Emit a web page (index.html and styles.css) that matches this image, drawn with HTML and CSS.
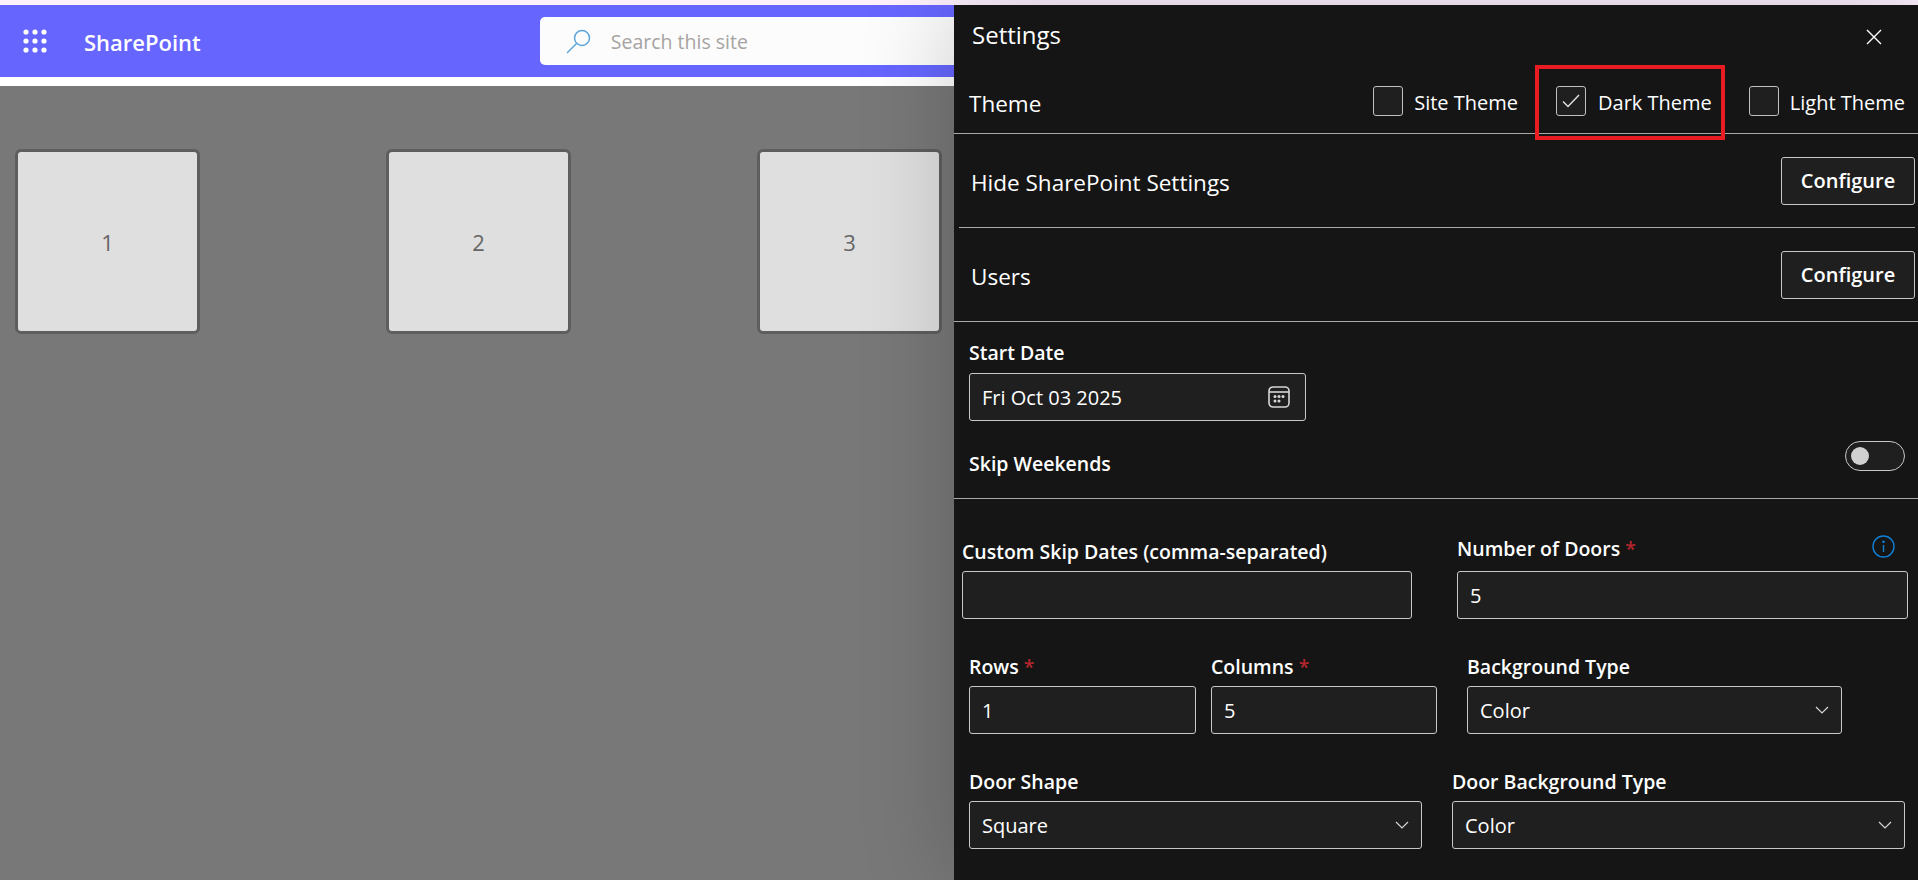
FILE: index.html
```html
<!DOCTYPE html>
<html lang="en">
<head>
    <meta charset="UTF-8">
    <title>SharePoint Settings</title>
    <link rel="stylesheet" href="styles.css">
</head>
<body>
    <div class="page">
        <main class="site">
            <header class="suite-bar">
                <svg class="waffle" width="24" height="24" viewBox="0 0 24 24" fill="#fff">
                    <circle cx="3" cy="3" r="2.6"/><circle cx="12" cy="3" r="2.6"/><circle cx="21" cy="3" r="2.6"/>
                    <circle cx="3" cy="12" r="2.6"/><circle cx="12" cy="12" r="2.6"/><circle cx="21" cy="12" r="2.6"/>
                    <circle cx="3" cy="21" r="2.6"/><circle cx="12" cy="21" r="2.6"/><circle cx="21" cy="21" r="2.6"/>
                </svg>
                <span class="brand">SharePoint</span>
                <div class="search">
                    <svg class="search-icon" width="25" height="25" viewBox="0 0 25 25" fill="none" stroke="#5ba4dc" stroke-width="1.5">
                        <circle cx="16" cy="9" r="7.5"/>
                        <path d="M10.5 14.5 1 24"/>
                    </svg>
                    <span class="search-text">Search this site</span>
                </div>
            </header>
            <div class="white-gap"></div>
            <section class="doors">
                <div class="door">1</div>
                <div class="door">2</div>
                <div class="door">3</div>
            </section>
        </main>

        <aside class="panel">
            <div class="panel-head">
                <span class="panel-title">Settings</span>
                <svg class="close" width="16" height="16" viewBox="0 0 16 16" stroke="#fff" stroke-width="1.4">
                    <path d="M1 1 15 15M15 1 1 15"/>
                </svg>
            </div>

            <div class="theme-row">
                <span class="row-title">Theme</span>
                <div class="theme-options">
                    <label class="check check-site"><span class="box"></span>Site Theme</label>
                    <label class="check check-dark">
                        <span class="box">
                            <svg width="18" height="14" viewBox="0 0 18 14" fill="none" stroke="#e4e4e4" stroke-width="1.4"><path d="M1 7.5 6 12.5 17 1"/></svg>
                        </span>
                        Dark Theme
                    </label>
                    <label class="check"><span class="box"></span>Light Theme</label>
                </div>
                <div class="highlight"></div>
            </div>

            <div class="config-row config-inset">
                <span class="row-title">Hide SharePoint Settings</span>
                <button class="config-btn">Configure</button>
            </div>
            <div class="config-row config-users">
                <span class="row-title">Users</span>
                <button class="config-btn">Configure</button>
            </div>

            <div class="date-section">
                <div class="field-label">Start Date</div>
                <div class="input date-input">
                    Fri Oct 03 2025
                    <svg width="22" height="22" viewBox="0 0 22 22" fill="none" stroke="#d6d6d6" stroke-width="1.6">
                        <rect x="1" y="1" width="20" height="20" rx="4"/>
                        <path d="M1 6h20"/>
                        <g fill="#d6d6d6" stroke="none">
                            <circle cx="7" cy="10.5" r="1.5"/><circle cx="11" cy="10.5" r="1.5"/><circle cx="15" cy="10.5" r="1.5"/>
                            <circle cx="7" cy="15" r="1.5"/><circle cx="11" cy="15" r="1.5"/>
                        </g>
                    </svg>
                </div>
                <div class="skip-row">
                    <span class="field-label skip-label">Skip Weekends</span>
                    <span class="toggle"><span class="knob"></span></span>
                </div>
            </div>

            <div class="form-grid grid-dates">
                <div class="field">
                    <div class="field-label">Custom Skip Dates (comma-separated)</div>
                    <div class="input"></div>
                </div>
                <div class="field">
                    <div class="field-label label-doors">
                        <span>Number of Doors <span class="req">*</span></span>
                        <svg class="info" width="23" height="23" viewBox="0 0 23 23" fill="none" stroke="#0f7fd6" stroke-width="1.4">
                            <circle cx="11.5" cy="11.5" r="10.5"/>
                            <path d="M11.5 10v7"/>
                            <circle cx="11.5" cy="6.8" r=".6" fill="#0f7fd6"/>
                        </svg>
                    </div>
                    <div class="input">5</div>
                </div>
            </div>

            <div class="form-grid grid-rows">
                <div class="field">
                    <div class="field-label">Rows <span class="req">*</span></div>
                    <div class="input">1</div>
                </div>
                <div class="field">
                    <div class="field-label">Columns <span class="req">*</span></div>
                    <div class="input">5</div>
                </div>
                <div class="field field-bg">
                    <div class="field-label">Background Type</div>
                    <div class="input select">
                        Color
                        <svg class="chev" width="14" height="8" viewBox="0 0 14 8" fill="none" stroke="#d6d6d6" stroke-width="1.2"><path d="M1 1 7 7 13 1"/></svg>
                    </div>
                </div>
            </div>

            <div class="form-grid grid-door">
                <div class="field">
                    <div class="field-label">Door Shape</div>
                    <div class="input select">
                        Square
                        <svg class="chev" width="14" height="8" viewBox="0 0 14 8" fill="none" stroke="#d6d6d6" stroke-width="1.2"><path d="M1 1 7 7 13 1"/></svg>
                    </div>
                </div>
                <div class="field">
                    <div class="field-label">Door Background Type</div>
                    <div class="input select">
                        Color
                        <svg class="chev" width="14" height="8" viewBox="0 0 14 8" fill="none" stroke="#d6d6d6" stroke-width="1.2"><path d="M1 1 7 7 13 1"/></svg>
                    </div>
                </div>
            </div>
        </aside>
    </div>
</body>
</html>
```

FILE: styles.css
```css
/* Base */
* {
    box-sizing: border-box;
}

html, body {
    margin: 0;
    height: 880px;
    overflow: hidden;
}

body {
    padding-top: 5px;
    background-color: #fdf1fd;
    font-family: "Open Sans", "Noto Sans", sans-serif;
}

.page {
    display: flex;
    height: 875px;
}

/* Left side, the site behind the panel */
.site {
    width: 954px;
    display: flex;
    flex-direction: column;
}

.suite-bar {
    height: 72px;
    flex: none;
    display: flex;
    align-items: flex-start;
    padding-left: 23px;
    background-color: #6666ff;
}

.waffle {
    margin-top: 24px;
}

.brand {
    margin-left: 37px;
    margin-top: 21px;
    color: #fff;
    font-size: 22px;
    line-height: 32px;
    font-weight: 600;
}

.search {
    margin-left: 339px;
    margin-top: 12px;
    width: 415px;
    height: 48px;
    display: flex;
    align-items: center;
    padding-left: 26px;
    background-color: #fcfcfc;
    border-radius: 5px 0 0 5px;
}

.search-text {
    margin-left: 20px;
    color: #a6a3a1;
    font-size: 19.5px;
}

.white-gap {
    height: 9px;
    flex: none;
    background-color: #fff;
}

.doors {
    flex: 1;
    display: flex;
    gap: 186px;
    padding: 63px 0 0 15px;
    background-color: #787878;
}

.door {
    width: 185px;
    height: 185px;
    display: flex;
    align-items: center;
    justify-content: center;
    padding-top: 1px;
    background-color: #dfdfdf;
    border: 3px solid #5e5e5e;
    border-radius: 6px;
    color: #666;
    font-size: 22px;
}

/* Settings panel */
.panel {
    width: 964px;
    position: relative;
    background-color: #151515;
    box-shadow: 0 0 90px rgba(0, 0, 0, 0.2);
    color: #fff;
    font-size: 20px;
}

.panel-head {
    height: 60px;
    display: flex;
    justify-content: space-between;
    align-items: center;
    padding: 0 36px 1px 18px;
}

.close {
    margin-top: 5px;
}

.panel-title {
    font-size: 24px;
}

.row-title {
    font-size: 22.5px;
}

.theme-row {
    height: 69px;
    position: relative;
    display: flex;
    justify-content: space-between;
    padding: 21px 13px 0 15px;
    border-bottom: 1px solid #a9a9a9;
}

.theme-row .row-title {
    line-height: 36px;
}

.theme-options {
    display: flex;
}

.check {
    display: flex;
    align-items: flex-start;
    line-height: 33px;
    gap: 11px;
}

.check-site {
    margin-right: 38px;
}

.check-dark {
    gap: 12px;
    margin-right: 37px;
}

.box {
    width: 30px;
    height: 30px;
    display: flex;
    align-items: center;
    justify-content: center;
    background-color: #1f1f1f;
    border: 1px solid #c0c0c0;
    border-radius: 3px;
}

/* Red marker drawn over the screenshot */
.highlight {
    position: absolute;
    left: 581px;
    top: 0;
    width: 190px;
    height: 75px;
    border: 4px solid #e81c22;
}

.config-row {
    height: 94px;
    display: flex;
    justify-content: space-between;
    align-items: center;
    padding: 0 3px 0 17px;
    border-bottom: 1px solid #a9a9a9;
}

.config-row .row-title {
    margin-top: 3px;
}

.config-inset {
    margin-left: 5px;
    margin-right: 3px;
    padding: 0 0 0 12px;
}

.config-btn {
    width: 134px;
    height: 48px;
    padding-bottom: 2px;
    background-color: #1f1f1f;
    border: 1px solid #c8c8c8;
    border-radius: 3px;
    color: #fff;
    font-family: inherit;
    font-size: 20px;
    font-weight: 600;
}

.date-section {
    height: 177px;
    padding: 19px 13px 0 15px;
    border-bottom: 1px solid #a9a9a9;
}

.date-section > .field-label {
    margin-bottom: 8px;
}

.field-label {
    font-size: 19.5px;
    font-weight: 600;
    line-height: 24px;
    margin-bottom: 7px;
}

.input {
    height: 48px;
    display: flex;
    align-items: center;
    justify-content: space-between;
    padding: 0 12px;
    background-color: #1f1f1f;
    border: 1px solid #c8c8c8;
    border-radius: 3px;
    font-size: 20px;
}

.date-input {
    width: 337px;
    padding-right: 15px;
}

.skip-row {
    display: flex;
    justify-content: space-between;
    margin-top: 20px;
}

.skip-label {
    margin-top: 11px;
}

.toggle {
    width: 60px;
    height: 30px;
    display: flex;
    align-items: center;
    padding-left: 5px;
    background-color: #1f1f1f;
    border: 1px solid #c8c8c8;
    border-radius: 15px;
}

.knob {
    width: 18px;
    height: 18px;
    background-color: #d0d0d0;
    border-radius: 50%;
}

.req {
    color: #b3262d;
}

.form-grid {
    display: grid;
}

.field {
    display: flex;
    flex-direction: column;
    justify-content: flex-end;
}

.grid-dates {
    grid-template-columns: 450px 451px;
    column-gap: 45px;
    height: 120px;
    padding-left: 8px;
}

.label-doors {
    display: flex;
    justify-content: space-between;
    align-items: flex-start;
    padding-right: 13px;
    margin-bottom: 10px;
}

.info {
    margin-top: -2px;
}

.grid-rows {
    grid-template-columns: 227px 226px 390px;
    column-gap: 15px;
    height: 115px;
    padding-left: 15px;
}

.field-bg {
    margin-left: 15px;
}

.grid-door {
    grid-template-columns: 453px 453px;
    column-gap: 30px;
    height: 115px;
    padding-left: 15px;
}

.chev {
    margin-right: 0;
}
```
